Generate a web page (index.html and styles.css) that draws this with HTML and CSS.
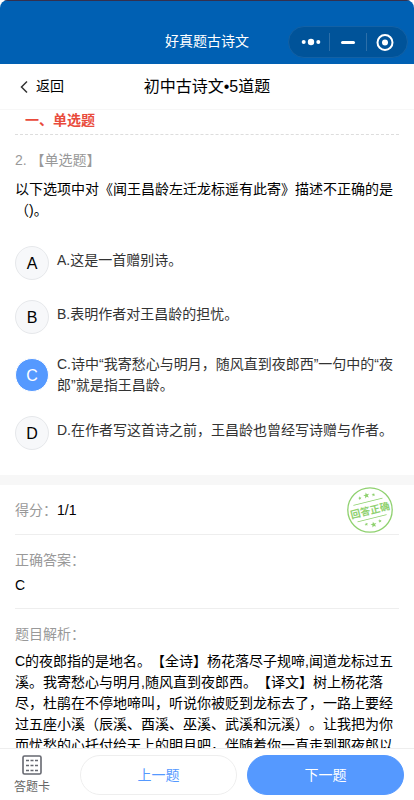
FILE: index.html
```
<!DOCTYPE html>
<html lang="zh-CN">
<head>
    <meta charset="UTF-8">
    <meta name="viewport" content="width=device-width, initial-scale=1.0">
    <title>好真题古诗文</title>
    <link rel="stylesheet" href="styles.css">
</head>
<body>
    <div class="app">
        <header class="titlebar">
            <span class="app-name">好真题古诗文</span>
            <div class="capsule">
                <button class="capsule-button" aria-label="更多">
                    <svg width="20" height="20" viewBox="0 0 20 20" fill="#fff">
                        <circle cx="2.7" cy="10" r="2"/>
                        <circle cx="10" cy="10" r="3.2"/>
                        <circle cx="17.3" cy="10" r="2"/>
                    </svg>
                </button>
                <button class="capsule-button" aria-label="最小化">
                    <svg width="20" height="20" viewBox="0 0 20 20">
                        <path d="M4.500 10.500H15.500" stroke="#fff" stroke-width="3" stroke-linecap="round"/>
                    </svg>
                </button>
                <button class="capsule-button" aria-label="关闭">
                    <svg width="20" height="20" viewBox="0 0 20 20">
                        <circle cx="10" cy="10.500" r="7.500" fill="none" stroke="#fff" stroke-width="2"/>
                        <circle cx="10" cy="10.500" r="3" fill="#fff"/>
                    </svg>
                </button>
            </div>
        </header>

        <nav class="navbar">
            <button class="back">
                <svg width="8" height="14" viewBox="0 0 8 14">
                    <path d="M7 1.500L1.500 7L7 12.500" fill="none" stroke="#333" stroke-width="1.500"/>
                </svg>
                返回
            </button>
            <h1 class="page-title">初中古诗文•5道题</h1>
        </nav>

        <main class="content">
            <h2 class="section-title">一、单选题</h2>

            <section class="question">
                <p class="question-type">2. 【单选题】</p>
                <p class="question-text" id="question">以下选项中对《闻王昌龄左迁龙标遥有此寄》描述不正确的是（)。</p>
                <div class="options" role="radiogroup" aria-labelledby="question">
                    <label class="option">
                        <input type="radio" name="answer" value="A">
                        <span class="letter" aria-hidden="true">A</span>
                        <span class="option-text">A.这是一首赠别诗。</span>
                    </label>
                    <label class="option">
                        <input type="radio" name="answer" value="B">
                        <span class="letter" aria-hidden="true">B</span>
                        <span class="option-text">B.表明作者对王昌龄的担忧。</span>
                    </label>
                    <label class="option">
                        <input type="radio" name="answer" value="C" checked>
                        <span class="letter" aria-hidden="true">C</span>
                        <span class="option-text">C.诗中“我寄愁心与明月，随风直到夜郎西”一句中的“夜郎”就是指王昌龄。</span>
                    </label>
                    <label class="option">
                        <input type="radio" name="answer" value="D">
                        <span class="letter" aria-hidden="true">D</span>
                        <span class="option-text">D.在作者写这首诗之前，王昌龄也曾经写诗赠与作者。</span>
                    </label>
                </div>
            </section>

            <section class="result">
                <div class="result-row score">
                    <p><span class="label">得分：</span>1/1</p>
                    <svg class="stamp" width="46" height="46" viewBox="0 0 46 46" role="img" aria-label="回答正确">
                        <defs>
                            <path id="star" d="M0 -3L0.800 -1L3 -0.900L1.300 0.500L1.900 2.600L0 1.400L-1.900 2.600L-1.300 0.500L-3 -0.900L-0.800 -1Z"/>
                        </defs>
                        <circle cx="23" cy="23" r="22.200" fill="none" stroke="#8fd16f" stroke-width="1.300"/>
                        <g transform="rotate(-14 23 23)" fill="#8fd16f">
                            <path d="M8 14.500H38M8 31.500H38" stroke="#8fd16f" stroke-width="1"/>
                            <text class="stamp-text" x="23" y="27" text-anchor="middle">回答正确</text>
                            <use href="#star" x="23" y="8"/>
                            <use href="#star" transform="translate(16 9) scale(.6)"/>
                            <use href="#star" transform="translate(30 9) scale(.6)"/>
                            <use href="#star" x="23" y="38"/>
                            <use href="#star" transform="translate(16 36) scale(.6)"/>
                            <use href="#star" transform="translate(30 36) scale(.6)"/>
                        </g>
                    </svg>
                </div>
                <div class="result-row">
                    <p class="label">正确答案：</p>
                    <p class="value">C</p>
                </div>
                <div class="result-row">
                    <p class="label">题目解析：</p>
                    <p class="value analysis">C的夜郎指的是地名。【全诗】杨花落尽子规啼,闻道龙标过五溪。我寄愁心与明月,随风直到夜郎西。【译文】树上杨花落尽，杜鹃在不停地啼叫，听说你被贬到龙标去了，一路上要经过五座小溪（辰溪、酉溪、巫溪、武溪和沅溪）。让我把为你而忧愁的心托付给天上的明月吧，伴随着你一直走到那夜郎以西。</p>
                </div>
            </section>
        </main>

        <footer class="toolbar">
            <button class="card-button">
                <svg width="20" height="20" viewBox="0 0 20 20" fill="none" stroke="#666870">
                    <rect x="1" y="1" width="18" height="18" rx="1.500" stroke-width="1.600"/>
                    <path d="M4 5.500H16M4 10.500H16M4 15.500H16" stroke-width="1.400" stroke-dasharray="3 1.500"/>
                </svg>
                答题卡
            </button>
            <button class="step-button">上一题</button>
            <button class="step-button primary">下一题</button>
        </footer>
    </div>
</body>
</html>
```
FILE: styles.css
```
* {
    box-sizing: border-box;
}
body {
    margin: 0;
    background-color: #fff;
    color: #000;
    font-family: "Liberation Sans", "Noto Sans CJK SC", sans-serif;
    font-size: 14px;
    line-height: 21px;
    text-spacing-trim: space-all;
}
h1, h2, p {
    margin: 0;
}
button {
    padding: 0;
    border: none;
    background: none;
    color: inherit;
    font: inherit;
    cursor: pointer;
}
.app {
    display: flex;
    flex-direction: column;
    height: 100vh;
    overflow: hidden;
    border-radius: 8px;
}

/* top bars */
.titlebar {
    display: grid;
    grid-template-columns: 1fr auto 1fr;
    align-items: center;
    flex: none;
    height: 64px;
    padding: 18px 6px 0;
    border-top: 1px solid #33304f;
    background-color: #0060b3;
    color: #fff;
}
.app-name {
    grid-column: 2;
}
.capsule {
    display: flex;
    align-items: center;
    justify-self: end;
    width: 120px;
    height: 32px;
    border: 1px solid #1361a5;
    border-radius: 16px;
    background-color: #005399;
}
.capsule-button {
    display: flex;
    flex: 1;
    align-items: center;
    justify-content: center;
    height: 18px;
}
.capsule-button:first-child {
    padding-left: 4px;
}
.capsule-button:last-child {
    padding-right: 4px;
}
.capsule-button + .capsule-button {
    border-left: 1px solid #2c6fa9;
}
.navbar {
    display: grid;
    grid-template-columns: 1fr auto 1fr;
    align-items: center;
    flex: none;
    height: 46px;
    padding: 0 20px;
    border-bottom: 1px solid #f7f7f7;
}
.back {
    display: flex;
    align-items: center;
    justify-self: start;
    gap: 8px;
}
.page-title {
    font-size: 16px;
    font-weight: normal;
}

/* question */
.content {
    flex: 1;
    min-height: 0;
    overflow-y: auto;
    scrollbar-width: none;
}
.section-title {
    margin: 0 15px;
    padding: 0 10px 4px;
    border-bottom: 1px dashed #ddd;
    color: #e94b3c;
    font-size: 14px;
    line-height: 20px;
}
.question {
    padding: 15px 15px 25px;
}
.question-type {
    margin-bottom: 8px;
    color: #999;
}
.options {
    display: grid;
    gap: 20px;
    margin-top: 25px;
}
.option {
    display: flex;
    align-items: center;
    gap: 8px;
    min-height: 34px;
    color: #333;
    cursor: pointer;
}
.option input {
    flex: none;
    width: 34px;
    height: 34px;
    margin: 0 -42px 0 0;
    border: 1px solid #e6e8eb;
    border-radius: 50%;
    background-color: #f7f8fa;
    appearance: none;
    cursor: pointer;
}
.option input:checked {
    border-color: #fff;
    background-color: #5599ff;
}
.letter {
    z-index: 1;
    flex: none;
    width: 34px;
    color: #000;
    font-size: 16px;
    text-align: center;
}
.option input:checked + .letter {
    color: #fff;
}
.option-text {
    min-height: 26px;
}

/* result */
.result {
    padding: 0 15px 20px;
    border-top: 10px solid #f7f7f7;
}
.result-row {
    padding: 15px 0 12px;
    border-bottom: 1px solid #eee;
}
.result-row:last-child {
    border-bottom: none;
}
.score {
    display: flex;
    align-items: center;
    justify-content: space-between;
    height: 50px;
    padding: 1px 6px 0 0;
}
.label {
    color: #999;
}
.value {
    margin-top: 4px;
}
.analysis {
    margin-top: 6px;
}
.stamp-text {
    font-size: 10px;
    font-weight: bold;
}

/* bottom bar */
.toolbar {
    display: flex;
    align-items: center;
    flex: none;
    gap: 10px;
    height: 52px;
    padding: 1px 10px 0 0;
    border-top: 1px solid #eee;
}
.card-button {
    display: flex;
    flex-direction: column;
    align-items: center;
    flex: none;
    gap: 4px;
    width: 64px;
    margin-right: 6px;
    color: #666;
    font-size: 12px;
    line-height: 16px;
}
.step-button {
    flex: 1;
    height: 40px;
    border: 1px solid #eee;
    border-radius: 20px;
    background-color: #fff;
    color: #5599ff;
}
.step-button.primary {
    border-color: #5599ff;
    background-color: #5599ff;
    color: #fff;
}
```
